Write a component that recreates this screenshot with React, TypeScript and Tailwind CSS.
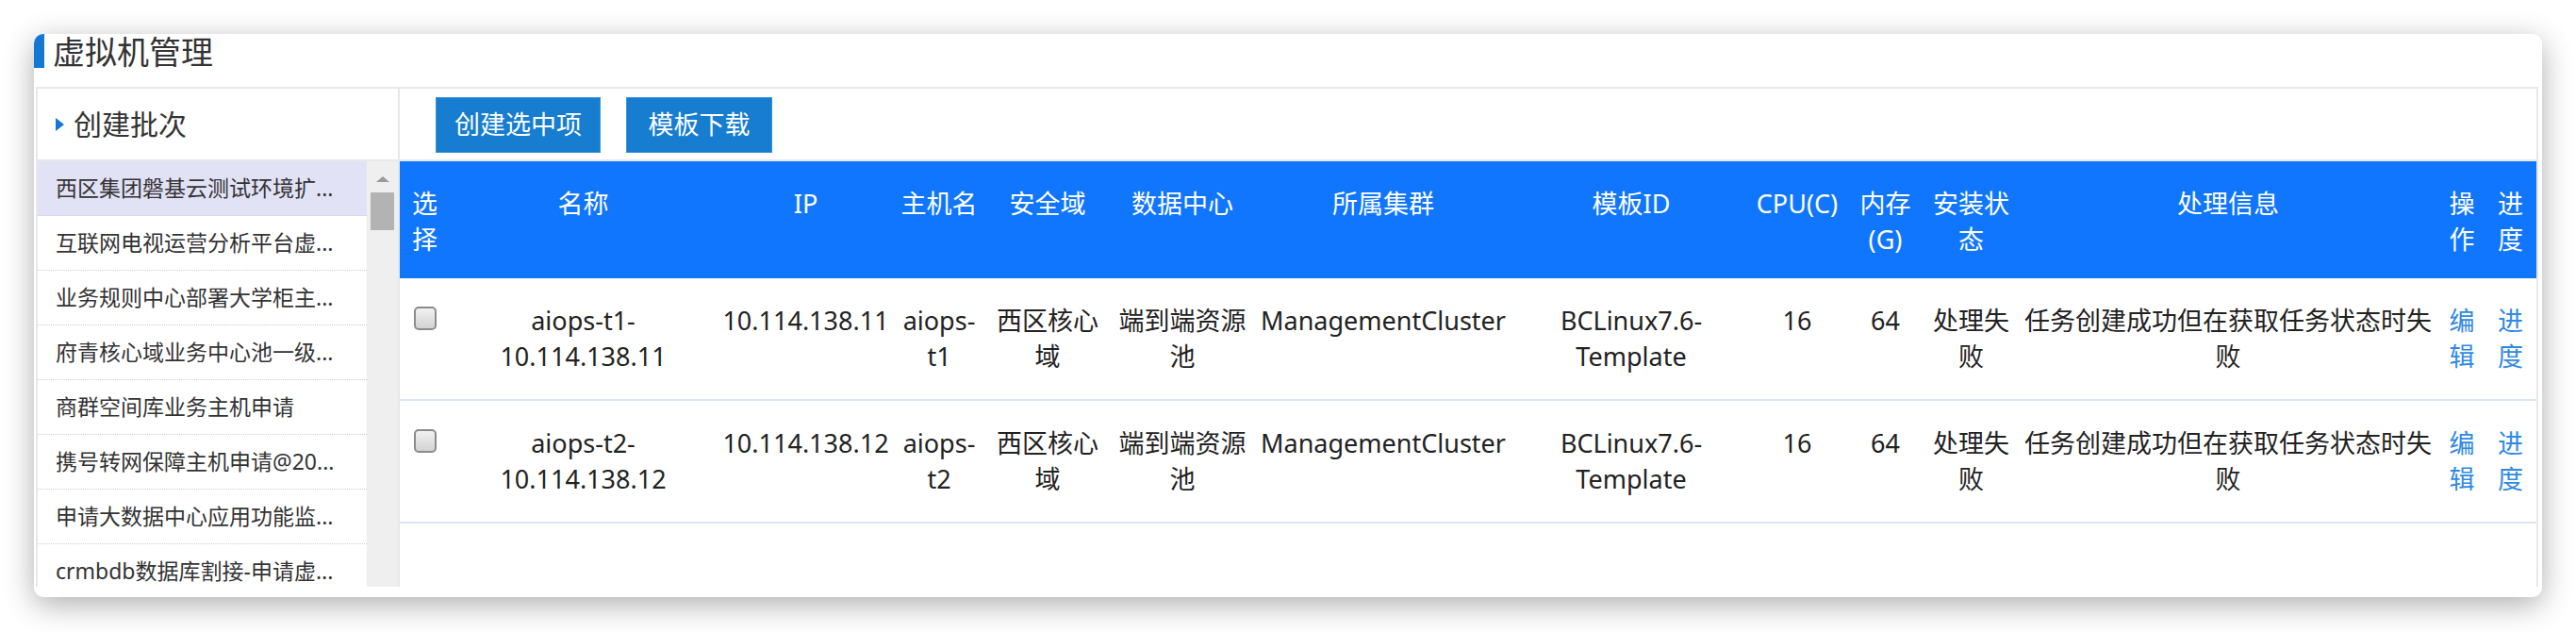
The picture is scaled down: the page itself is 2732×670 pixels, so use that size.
import React from "react";

const cols =
  "grid grid-cols-[53px_283px_189px_94px_136px_150px_276px_250px_102px_85px_97px_448px_48px_55px]";

const headers: string[][] = [
  ["选", "择"],
  ["名称"],
  ["IP"],
  ["主机名"],
  ["安全域"],
  ["数据中心"],
  ["所属集群"],
  ["模板ID"],
  ["CPU(C)"],
  ["内存", "(G)"],
  ["安装状", "态"],
  ["处理信息"],
  ["操", "作"],
  ["进", "度"],
];

const rows = [
  { n: "1", ip: "10.114.138.11" },
  { n: "2", ip: "10.114.138.12" },
];

const listItems = [
  "西区集团磐基云测试环境扩...",
  "互联网电视运营分析平台虚...",
  "业务规则中心部署大学柜主...",
  "府青核心域业务中心池一级...",
  "商群空间库业务主机申请",
  "携号转网保障主机申请@20...",
  "申请大数据中心应用功能监...",
  "crmbdb数据库割接-申请虚...",
];

function Lines({ lines, className = "" }: { lines: string[]; className?: string }) {
  return (
    <div className={"pt-[26px] text-center whitespace-nowrap leading-[38px] " + className}>
      {lines.map((l, i) => (
        <div key={i}>{l}</div>
      ))}
    </div>
  );
}

export default function App() {
  return (
    <div className="w-[2732px] h-[670px] bg-white pt-[36px] pl-[36px] font-['Noto_Sans','Noto_Sans_CJK_SC',sans-serif]">
      <div className="w-[2660px] h-[597px] bg-white rounded-[10px] shadow-[0_8px_32px_rgba(0,0,0,0.32)] flex flex-col">
        {/* Title */}
        <div className="h-[56px] shrink-0 flex items-start">
          <div className="w-[11px] h-[36px] bg-[#1477d2] rounded-tl-[10px]" />
          <div className="ml-[9px] text-[34px] leading-[38px] text-[#333]">虚拟机管理</div>
        </div>

        {/* Panel */}
        <div className="ml-[2px] w-[2654px] h-[530px] shrink-0 border-t-2 border-l-2 border-r-2 border-[#e8e8e8] flex overflow-hidden">
          {/* Left column */}
          <div className="w-[384px] shrink-0 border-r-2 border-[#e8e8e8] flex flex-col">
            <div className="h-[77px] shrink-0 border-b-2 border-[#e8e8e8] flex items-center pl-[19px]">
              <div className="w-0 h-0 border-l-[9px] border-l-[#1477d2] border-y-[7px] border-y-transparent" />
              <div className="ml-[10px] text-[30px] leading-[38px] text-[#333]">创建批次</div>
            </div>
            <div className="flex-1 flex overflow-hidden">
              <div className="w-[349px] shrink-0 flex flex-col">
                {listItems.map((t, i) => (
                  <div
                    key={i}
                    className={
                      "h-[58px] shrink-0 flex items-center pl-[19px] text-[23px] text-[#333] whitespace-nowrap border-b border-dotted border-[#cfcfcf] " +
                      (i === 0 ? "bg-[#e2e2f7]" : "bg-white")
                    }
                  >
                    {t}
                  </div>
                ))}
              </div>
              <div className="w-[33px] shrink-0 bg-[#efefef] flex flex-col items-center pt-[16px]">
                <div className="w-0 h-0 border-b-[6px] border-b-[#9a9a9a] border-x-[7px] border-x-transparent" />
                <div className="mt-[11px] w-[25px] h-[40px] bg-[#b3b3b3]" />
              </div>
            </div>
          </div>

          {/* Right column */}
          <div className="flex-1 flex flex-col">
            <div className="h-[77px] shrink-0 border-b-2 border-[#e8e8e8] flex items-start pl-[38px] pt-[9px] gap-[27px]">
              <div className="w-[175px] h-[59px] bg-[#177dd0] border border-[#3a92dc] text-white text-[27px] flex items-center justify-center">
                创建选中项
              </div>
              <div className="w-[155px] h-[59px] bg-[#177dd0] border border-[#3a92dc] text-white text-[27px] flex items-center justify-center">
                模板下载
              </div>
            </div>

            <div className={cols + " h-[124px] shrink-0 bg-[#1076fe] text-white text-[27px]"}>
              {headers.map((h, i) => (
                <Lines key={i} lines={h} />
              ))}
            </div>

            {rows.map((r) => (
              <div
                key={r.n}
                className={cols + " h-[130px] shrink-0 border-b-2 border-[#d9e6f5] text-[27px] text-[#222]"}
              >
                <div className="flex justify-center pt-[30px]">
                  <div className="w-[24px] h-[25px] rounded-[5px] border-2 border-[#8c8c8c] bg-gradient-to-b from-[#f2f2f2] to-[#d2d2d2]" />
                </div>
                <Lines lines={["aiops-t" + r.n + "-", r.ip]} />
                <Lines lines={[r.ip]} />
                <Lines lines={["aiops-", "t" + r.n]} />
                <Lines lines={["西区核心", "域"]} />
                <Lines lines={["端到端资源", "池"]} />
                <Lines lines={["ManagementCluster"]} />
                <Lines lines={["BCLinux7.6-", "Template"]} />
                <Lines lines={["16"]} />
                <Lines lines={["64"]} />
                <Lines lines={["处理失", "败"]} />
                <Lines lines={["任务创建成功但在获取任务状态时失", "败"]} />
                <Lines lines={["编", "辑"]} className="text-[#3089e3]" />
                <Lines lines={["进", "度"]} className="text-[#3089e3]" />
              </div>
            ))}
          </div>
        </div>
      </div>
    </div>
  );
}
